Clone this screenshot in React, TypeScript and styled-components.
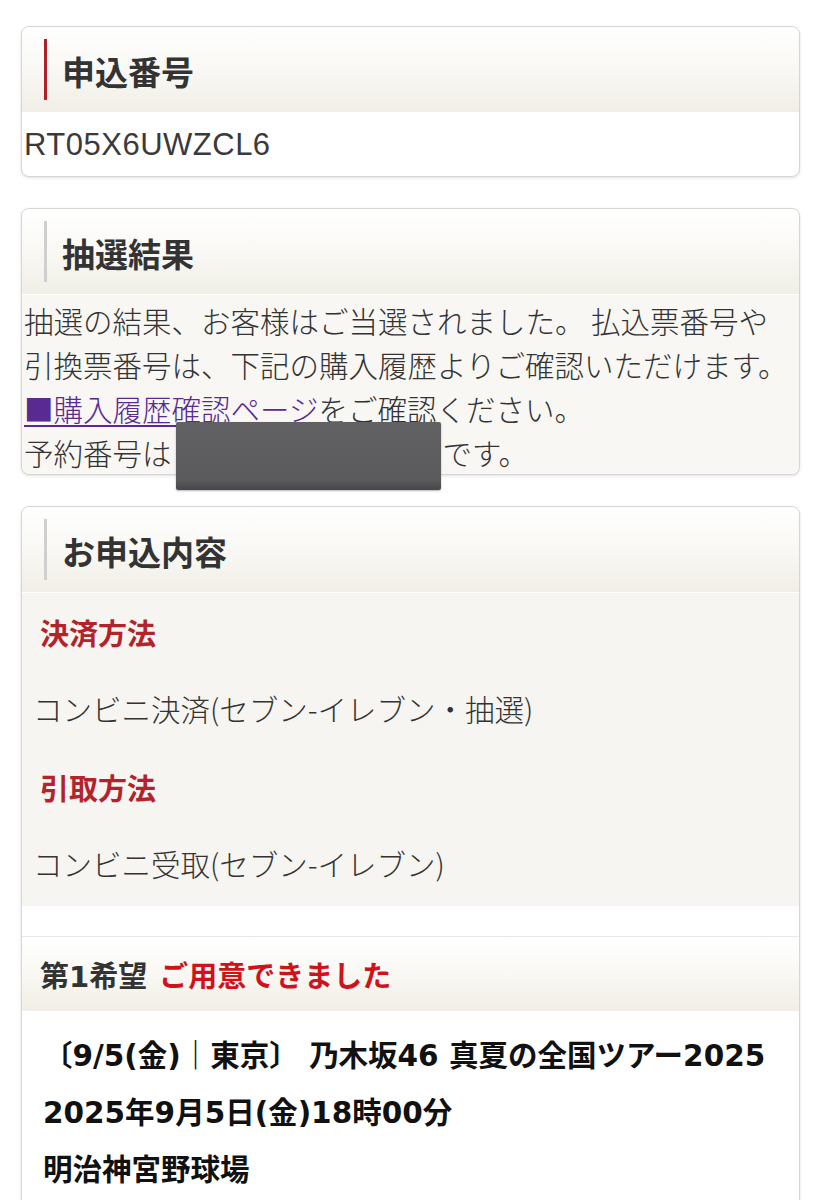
import React from 'react';
import styled, { createGlobalStyle } from 'styled-components';

const GlobalStyle = createGlobalStyle`
  body {
    margin: 0;
    background: #fff;
    font-family: "Noto Sans CJK JP", "Noto Sans", sans-serif;
    color: #333;
  }
`;

const Page = styled.div`
  display: flex;
  flex-direction: column;
  gap: 31px;
  padding: 26px 21px 0 21px;
`;

const Card = styled.section`
  border: 1px solid #d6d6d6;
  border-radius: 8px;
  box-shadow: 0 1px 3px rgba(0, 0, 0, 0.12);
  background: #fff;
`;

const CardHeader = styled.div`
  height: 85px;
  box-sizing: border-box;
  padding: 12px 0 12px 22px;
  border-radius: 8px 8px 0 0;
  background: linear-gradient(to bottom, #ffffff 0%, #f9f8f4 50%, #f0eee6 100%);
`;

const Title = styled.h2<{ $bar: string }>`
  margin: 0;
  height: 61px;
  box-sizing: border-box;
  padding: 4px 0 0 15px;
  line-height: 57px;
  border-left: 3px solid ${p => p.$bar};
  font-size: 33px;
  font-weight: 700;
  color: #333;
`;

const CodeBody = styled.div`
  height: 64px;
  line-height: 66px;
  padding: 0 2px;
  font-family: "Liberation Sans", Arial, sans-serif;
  font-size: 31px;
  letter-spacing: 0.5px;
  color: #3a3a3a;
  border-radius: 0 0 8px 8px;
`;

const TextBody = styled.div`
  padding: 3px 2px 0;
  height: 180px;
  box-sizing: border-box;
  background: #f8f7f3;
  border-top: 1px solid #fff;
  border-radius: 0 0 8px 8px;
  font-size: 29.5px;
  font-weight: 300;
  line-height: 44px;
  color: #333;
  white-space: nowrap;
`;

const HistoryLink = styled.a`
  color: #5a2a93;
  text-decoration: underline;
  text-underline-offset: 4px;
  text-decoration-thickness: 2px;
`;

const Redacted = styled.span`
  position: relative;
  display: inline-block;
  width: 271px;
  height: 1px;
`;

const RedactBox = styled.span`
  position: absolute;
  left: 4px;
  top: -42px;
  width: 265px;
  height: 68px;
  border-radius: 2px;
  background: linear-gradient(to bottom, #616164 0%, #5b5b5e 85%, #47474a 100%);
  box-shadow: 0 1px 2px rgba(0, 0, 0, 0.3);
`;

const DetailList = styled.dl`
  margin: 0;
  padding: 17px 0 21px;
  background: #f6f5f1;
  border-top: 1px solid #fff;
`;

const Term = styled.dt`
  margin: 35px 0 0;
  padding-left: 18px;
  font-size: 29px;
  font-weight: 700;
  line-height: 44px;
  color: #b3232c;

  &:first-child {
    margin-top: 0;
  }
`;

const Desc = styled.dd`
  margin: 32px 0 0;
  padding-left: 11px;
  font-size: 29.5px;
  font-weight: 300;
  line-height: 44px;
  color: #333;
`;

const Spacer = styled.div`
  height: 30px;
  background: #fff;
`;

const ChoiceHeader = styled.div`
  height: 75px;
  box-sizing: border-box;
  display: flex;
  align-items: center;
  gap: 12px;
  padding-left: 18px;
  border-top: 1px solid #e8e8e8;
  background: linear-gradient(to bottom, #ffffff 0%, #f9f8f3 50%, #f0eee5 100%);
  font-family: "DejaVu Sans", "Noto Sans CJK JP", sans-serif;
  font-size: 29px;
  font-weight: 700;
`;

const Rank = styled.span`
  color: #333;
`;

const Status = styled.span`
  color: #d0121b;
`;

const EventInfo = styled.div`
  padding: 17px 0 20px 21px;
  background: #fff;
  font-family: "DejaVu Sans", "Noto Sans CJK JP", sans-serif;
  font-size: 29.5px;
  font-weight: 700;
  line-height: 57px;
  color: #111;
`;

export default function App() {
  return (
    <>
      <GlobalStyle />
      <Page>
        <Card>
          <CardHeader>
            <Title $bar="#b0202a">申込番号</Title>
          </CardHeader>
          <CodeBody>RT05X6UWZCL6</CodeBody>
        </Card>

        <Card>
          <CardHeader>
            <Title $bar="#cfcfcf">抽選結果</Title>
          </CardHeader>
          <TextBody>
            抽選の結果、お客様はご当選されました。 払込票番号や
            <br />
            引換票番号は、下記の購入履歴よりご確認いただけます。
            <br />
            <HistoryLink href="#">■購入履歴確認ページ</HistoryLink>をご確認ください。
            <br />
            予約番号は
            <Redacted>
              <RedactBox />
            </Redacted>
            です。
          </TextBody>
        </Card>

        <Card>
          <CardHeader>
            <Title $bar="#cfcfcf">お申込内容</Title>
          </CardHeader>
          <DetailList>
            <Term>決済方法</Term>
            <Desc>コンビニ決済(セブン-イレブン・抽選)</Desc>
            <Term>引取方法</Term>
            <Desc>コンビニ受取(セブン-イレブン)</Desc>
          </DetailList>
          <Spacer />
          <ChoiceHeader>
            <Rank>第1希望</Rank>
            <Status>ご用意できました</Status>
          </ChoiceHeader>
          <EventInfo>
            〔9/5(金)｜東京〕 乃木坂46 真夏の全国ツアー2025
            <br />
            2025年9月5日(金)18時00分
            <br />
            明治神宮野球場
          </EventInfo>
        </Card>
      </Page>
    </>
  );
}
